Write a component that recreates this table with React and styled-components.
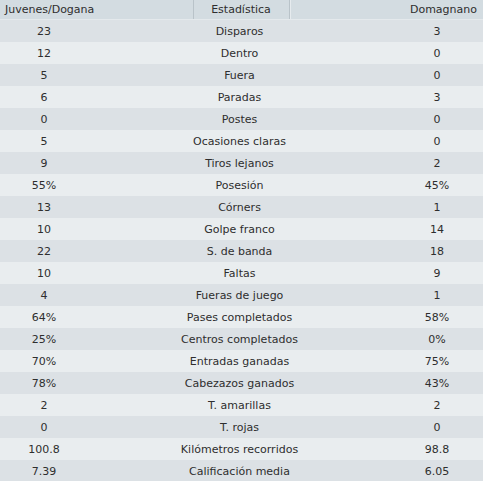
import React from "react";
import styled, { createGlobalStyle } from "styled-components";

const GlobalStyle = createGlobalStyle`
  html, body {
    margin: 0;
    padding: 0;
    background: #e9edef;
  }
  body {
    font-family: "DejaVu Sans", sans-serif;
    font-size: 11px;
    color: #2e2e2e;
  }
`;

const rows = [
  ["23", "Disparos", "3"],
  ["12", "Dentro", "0"],
  ["5", "Fuera", "0"],
  ["6", "Paradas", "3"],
  ["0", "Postes", "0"],
  ["5", "Ocasiones claras", "0"],
  ["9", "Tiros lejanos", "2"],
  ["55%", "Posesión", "45%"],
  ["13", "Córners", "1"],
  ["10", "Golpe franco", "14"],
  ["22", "S. de banda", "18"],
  ["10", "Faltas", "9"],
  ["4", "Fueras de juego", "1"],
  ["64%", "Pases completados", "58%"],
  ["25%", "Centros completados", "0%"],
  ["70%", "Entradas ganadas", "75%"],
  ["78%", "Cabezazos ganados", "43%"],
  ["2", "T. amarillas", "2"],
  ["0", "T. rojas", "0"],
  ["100.8", "Kilómetros recorridos", "98.8"],
  ["7.39", "Calificación media", "6.05"],
];

const App = () => {
  return (
    <>
      <GlobalStyle />
      <Table>
        <Header>
          <HeadCell align="left">Juvenes/Dogana</HeadCell>
          <HeadCell align="center" divider>Estadística</HeadCell>
          <HeadCell align="right" divider double>Domagnano</HeadCell>
        </Header>
        {rows.map((r, i) => (
          <Row key={r[1]} shade={i % 2 === 0}>
            <Cell>{r[0]}</Cell>
            <Cell>{r[1]}</Cell>
            <Cell>{r[2]}</Cell>
          </Row>
        ))}
      </Table>
    </>
  );
};

export default App;

const Table = styled.div`
  width: 483px;
  display: flex;
  flex-direction: column;
`;

const Header = styled.div`
  display: grid;
  grid-template-columns: 193px 96px 1fr;
  height: 19px;
  background: #d3dce1;
  border-bottom: 1px solid #e4e9ec;
`;

const HeadCell = styled.div`
  display: flex;
  align-items: center;
  justify-content: ${(p) =>
    p.align === "left" ? "flex-start" : p.align === "right" ? "flex-end" : "center"};
  padding: 0 6px 0 5px;
  border-left: ${(p) => (p.divider ? "1px solid #b9c3c9" : "none")};
  box-shadow: ${(p) => (p.double ? "inset 1px 0 0 #e6ebee" : "none")};
  white-space: nowrap;
`;

const Row = styled.div`
  display: grid;
  grid-template-columns: 88px 1fr 92px;
  height: 22px;
  align-items: center;
  background: ${(p) => (p.shade ? "#dce1e5" : "#e9edef")};
`;

const Cell = styled.div`
  text-align: center;
  white-space: nowrap;
`;
